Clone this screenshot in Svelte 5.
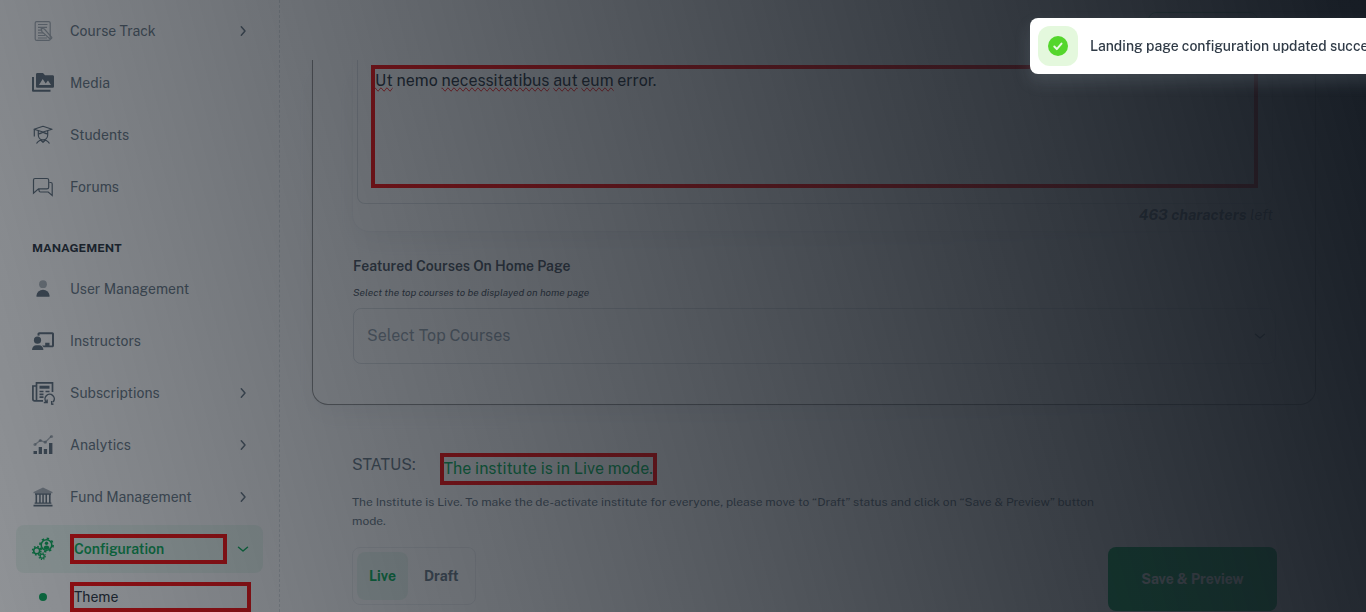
<script>
  const general = [
    { label: 'Course Track', icon: 'track', expandable: true },
    { label: 'Media', icon: 'media' },
    { label: 'Students', icon: 'students' },
    { label: 'Forums', icon: 'forums' }
  ];
  const management = [
    { label: 'User Management', icon: 'user' },
    { label: 'Instructors', icon: 'instructors' },
    { label: 'Subscriptions', icon: 'subscriptions', expandable: true },
    { label: 'Analytics', icon: 'analytics', expandable: true },
    { label: 'Fund Management', icon: 'fund', expandable: true },
    { label: 'Configuration', icon: 'config', expandable: true, open: true }
  ];
  const words = [
    { text: 'Ut', flagged: true },
    { text: 'nemo' },
    { text: 'necessitatibus', flagged: true },
    { text: 'aut', flagged: true },
    { text: 'eum', flagged: true },
    { text: 'error.' }
  ];
  let about = $state(words.map((w) => w.text).join(' '));
  let status = $state('Live');
</script>

{#snippet icon(name)}
  <svg class="icon" viewBox="0 0 24 24" aria-hidden="true" fill="none" stroke="currentColor">
    {#if name === 'track'}
      <g opacity="0.55" stroke-width="1.2">
        <rect x="4.2" y="2.6" width="15" height="18.800" rx="1.5" />
        <path d="M7 5.500h9.500M7 8.300h9M7 11.100h3.500M7 13.900h5M7 16.500h7M7 19h9" />
        <path d="M10.200 9.200l3.200.8 7.300 8.300c.6.800-.9 2.300-1.800 1.600l-8-7.300z" />
      </g>
    {:else if name === 'media'}
      <path d="M2 6v13.800h17.500" stroke-width="2" stroke-linejoin="round" />
      <path fill="currentColor" stroke="none" fill-rule="evenodd" d="M6.400 2h5.600l2 2.200h7.600c.8 0 1.400.6 1.400 1.400v9.800c0 .8-.6 1.400-1.400 1.400H6.400C5.600 16.800 5 16.200 5 15.400v-12C5 2.600 5.600 2 6.400 2zM8 14h12l-3-4.400-2.300 3-3-4.600z" />
    {:else if name === 'students'}
      <g stroke-width="1.200" stroke-linejoin="round">
        <path d="M3 6.300L12 3.300l9 3L12 9zM3.300 7v6.500M7.300 8v4c0 3 2.200 4.800 4.700 4.800s4.700-1.800 4.700-4.800V8M7.500 10.800c2.500-.2 3.500-1.300 4.500-1.300s2 1.100 4.500 1.300M5.500 20.500c1-1.800 2-2.500 4-3.500l2.500 2.300 2.500-2.300c2 1 3 1.700 4 3.500" />
      </g>
    {:else if name === 'forums'}
      <path d="M2.500 5c0-1 .5-1.500 1.500-1.500h12c1 0 1.700.7 1.700 1.700v7c0 1-.7 1.700-1.700 1.700H7.500l-5 4.300zM18.500 7.500h1.300c.8 0 1.400.6 1.400 1.400v11.600l-4-3.500H9.500c-1 0-1.500-.6-1.500-1.500V14" stroke-width="1.200" />
    {:else if name === 'user'}
      <g fill="currentColor" stroke="none">
        <circle cx="12" cy="7.200" r="3.900" opacity="0.5" />
        <path d="M5.500 19.800v-1.200a6.500 5.900 0 0 1 13 0v1.200z" />
      </g>
    {:else if name === 'instructors'}
      <g fill="currentColor" stroke="none">
        <circle cx="6.500" cy="11.200" r="3.600" />
        <path d="M1 21c0-3 2-4.800 4.400-4.800h2.700c2.400 0 4.300 1.800 4.300 4.800z" />
        <path d="M6.500 6.500V5c0-1 .8-1.800 1.800-1.800h13c1 0 1.700.8 1.700 1.800v11.500c0 1-.7 1.800-1.700 1.800H12.500c-.3-.8-.8-1.300-1.500-1.800h3.200V13.800h4.300v2.700H21V5.200H8.500v1.600z" />
      </g>
    {:else if name === 'subscriptions'}
      <g stroke-width="1.700">
        <path d="M5 5H1.900v13c0 1.200.8 1.900 1.800 1.900H12M5.500 19.500V1.900h16V11" />
        <path d="M8.500 6.200h10" stroke-width="3" />
        <path d="M8.500 10.500h4M14.500 10.500h4M8.500 13.300h4M8.500 16.200h4" />
        <path d="M15.500 21.200a4.600 4.600 0 1 1 6.600-.3M12.800 21.600h3.300v-3M22.500 23.200l-1.800-.2v-3" stroke-width="1.500" />
      </g>
    {:else if name === 'analytics'}
      <path d="M4 11.500l5.300-4 5 1.700 6-6" opacity="0.5" stroke-width="1.400" />
      <g fill="currentColor" stroke="none">
        <g opacity="0.5">
          <circle cx="4" cy="11.500" r="1.600" /><circle cx="9.300" cy="7.500" r="1.600" />
          <circle cx="14.300" cy="9.200" r="1.600" /><circle cx="20.500" cy="3.500" r="1.600" />
        </g>
        <path d="M2.500 18h3.500v3H2.500zM7.700 14h3.300v7H7.700zM12.800 16h3.300v5h-3.300zM18 10h3.400v11H18z" />
      </g>
    {:else if name === 'fund'}
      <g fill="currentColor" stroke="none">
        <path d="M12 2.500L21.500 7v1.200h-19V7z" opacity="0.55" />
        <path d="M4 8.300h16v1.400H4zM4.500 9.700h1.600v8H4.500zM8.200 9.700h1.500v8H8.200zM11.300 9.700h1.500v8h-1.500zM14.500 9.700H16v8h-1.500zM18 9.700h1.600v8H18zM3.600 17.500h16.800v1.300H3.600zM2.500 19.800h19v1.700h-19z" />
      </g>
    {:else}
      <circle cx="15.500" cy="8" r="5.300" stroke-width="1.600" />
      <circle cx="15.500" cy="8" r="6.600" stroke-width="1.700" stroke-dasharray="2.400 2.780" />
      <circle cx="5.700" cy="13.700" r="3" stroke-width="1.600" />
      <circle cx="5.700" cy="13.700" r="4.200" stroke-width="1.500" stroke-dasharray="1.600 1.700" />
      <circle cx="11.200" cy="19.200" r="2" stroke-width="1.300" />
      <circle cx="11.200" cy="19.200" r="3.200" stroke-width="1.300" stroke-dasharray="1.200 1.310" />
      <g fill="currentColor" stroke="none">
        <circle cx="15.500" cy="6.300" r="1.700" />
        <path d="M12.500 11.500c0-2 1.300-3 3-3s3 1 3 3l-3 1.200z" />
      </g>
    {/if}
  </svg>
{/snippet}

{#snippet chevron(open)}
  <svg class="chevron" viewBox="0 0 16 16" aria-hidden="true" fill="none" stroke="currentColor" stroke-width="1.500" stroke-linecap="round" stroke-linejoin="round">
    <path d={open ? 'M3.500 6.200L8 10l4.500-3.800' : 'M6.300 3.800L10 8l-3.700 4.200'} />
  </svg>
{/snippet}

{#snippet navItem(item)}
  <li>
    {#if item.expandable}
      <button type="button" class="item" class:active={item.open} aria-expanded={!!item.open}>
        {@render icon(item.icon)}
        <span class="label" class:marked={item.open}>{item.label}</span>
        {@render chevron(item.open)}
      </button>
    {:else}
      <a class="item" href="#{item.icon}">
        {@render icon(item.icon)}
        <span class="label">{item.label}</span>
      </a>
    {/if}
  </li>
{/snippet}

<div class="app">
  <nav class="sidebar">
    <ul>
      {#each general as item}{@render navItem(item)}{/each}
    </ul>
    <h2>Management</h2>
    <ul>
      {#each management as item}{@render navItem(item)}{/each}
      <li>
        <a class="item sub" href="#theme">
          <span class="dot"></span>
          <span class="label marked">Theme</span>
        </a>
      </li>
    </ul>
  </nav>

  <div class="page">
    <header><div class="outline"></div></header>
    <main>
      <section class="card">
        <div class="panel">
          <div class="field">
            <div class="editor">
              <div class="spelling" aria-hidden="true">{#each words as word, i}{i ? ' ' : ''}<span class:flagged={word.flagged}>{word.text}</span>{/each}</div>
              <textarea aria-label="About the institute" spellcheck="false" bind:value={about}></textarea>
            </div>
          </div>
          <p class="count"><strong>463 characters</strong> left</p>
        </div>

        <label class="title" for="courses">Featured Courses On Home Page</label>
        <p class="hint">Select the top courses to be displayed on home page</p>
        <div class="select">
          <select id="courses"><option>Select Top Courses</option></select>
          {@render chevron(true)}
        </div>
      </section>

      <section class="status">
        <div class="state">
          <span class="name">STATUS:</span>
          <span class="marked live">The institute is in Live mode.</span>
        </div>
        <p class="note">
          The Institute is Live. To make the de-activate institute for everyone, please move to “Draft” status and click on “Save &amp; Preview” button mode.
        </p>
        <div class="actions">
          <div class="toggle">
            {#each ['Live', 'Draft'] as option}
              <button type="button" class:on={status === option} aria-pressed={status === option} onclick={() => (status = option)}>{option}</button>
            {/each}
          </div>
          <button type="button" class="save">Save &amp; Preview</button>
        </div>
      </section>
    </main>
  </div>
</div>

<div class="backdrop"></div>

<div class="toast" role="status">
  <span class="badge">
    <svg viewBox="0 0 24 24" aria-hidden="true">
      <circle cx="12" cy="12" r="10" fill="#54d62c" />
      <path d="M8.300 12.500l2.500 2.600 4.700-5.500" fill="none" stroke="#e9f9e4" stroke-width="2" stroke-linecap="round" stroke-linejoin="round" />
    </svg>
  </span>
  <span>Landing page configuration updated successfully</span>
</div>

<style>
  :global(body) {
    overflow: hidden;
    background: #fff;
    color: #212b36;
    font-family: "Public Sans", Inter, sans-serif;
    font-size: 14px;
    line-height: 22px;
  }
  .app, .app *, .toast { box-sizing: border-box; }
  button, select, textarea { font: inherit; color: inherit; }
  p, h2, ul { margin: 0; padding: 0; }
  .app { display: flex; height: 100vh; overflow: hidden; }

  .sidebar {
    flex: 0 0 280px;
    padding: 7px 16px 0;
    border-right: 1px dashed rgba(145, 158, 171, 0.32);
    overflow: hidden;
  }
  ul { list-style: none; display: flex; flex-direction: column; gap: 4px; }
  h2 {
    padding: 28px 16px 8px;
    font-size: 12px;
    line-height: 18px;
    font-weight: 700;
    text-transform: uppercase;
  }
  .item {
    display: flex;
    align-items: center;
    gap: 15px;
    width: 100%;
    height: 48px;
    padding: 0 12px 0 15px;
    border: 0;
    border-radius: 8px;
    background: none;
    color: #637381;
    text-align: left;
    text-decoration: none;
  }
  .item.active { background: rgba(0, 171, 85, 0.08); color: #00ab55; font-weight: 600; }
  .icon { flex: none; width: 24px; height: 24px; }
  .item:not(.active) .icon { color: #5a6a78; }
  .label { flex: 1; }
  .chevron { flex: none; width: 16px; height: 16px; }
  .marked { border: 4px solid #f00; }
  .active .label { margin-right: -7px; }
  .item.active .chevron { margin-left: 0; }
  .item.sub { height: 40px; color: #212b36; }
  .dot { flex: none; width: 8px; height: 8px; margin: 0 8px; border-radius: 50%; background: #00ab55; }

  .page { flex: 1; min-width: 0; display: flex; flex-direction: column; }
  header { flex: none; display: flex; justify-content: flex-end; height: 60px; padding: 12px 108px; }
  .outline { width: 110px; border: 1px solid rgba(0, 171, 85, 0.5); border-radius: 8px; }
  main { flex: 1; min-height: 0; overflow: hidden; padding: 0 50px 0 32px; }
  .card {
    padding: 0 39px 40px 40px;
    border: 1px solid #919191;
    border-top: 0;
    border-radius: 0 0 16px 16px;
    box-shadow: 0 0 2px rgba(145, 158, 171, 0.2), 0 12px 24px -4px rgba(145, 158, 171, 0.12);
  }
  .panel {
    padding: 0 3px 5px 4px;
    border-radius: 0 0 16px 16px;
    box-shadow: 0 0 2px rgba(145, 158, 171, 0.2), 0 12px 24px -4px rgba(145, 158, 171, 0.12);
  }
  .field {
    padding: 5px 14px 15px 13px;
    border: 1px solid rgba(145, 158, 171, 0.32);
    border-top: 0;
    border-radius: 0 0 8px 8px;
  }
  .editor { display: grid; border: 4px solid #f00; font-size: 16px; line-height: 23px; }
  .spelling, textarea { grid-area: 1 / 1; width: 100%; height: 115px; padding: 0; border: 0; }
  .spelling { color: transparent; }
  .flagged { text-decoration: spelling-error; }
  textarea { display: block; background: none; resize: none; outline: 0; }
  .count { font-size: 15px; font-style: italic; text-align: right; color: #637381; }
  .title { display: block; margin-top: 24px; font-weight: 600; color: #454f5b; }
  .hint { margin: 6px 0 7px; font-size: 10px; line-height: 18px; font-style: italic; color: #454f5b; }
  .select { display: grid; align-items: center; }
  .select > * , .select > :global(svg) { grid-area: 1 / 1; }
  .select .chevron { justify-self: end; margin-right: 8px; pointer-events: none; color: #637381; }
  select {
    appearance: none;
    width: 100%;
    height: 56px;
    padding: 0 13px;
    border: 1px solid rgba(145, 158, 171, 0.32);
    border-radius: 8px;
    background: none;
    color: #919eab;
    font-size: 16px;
  }

  .status { padding: 48px 39px 0 40px; color: #637381; }
  .state { display: flex; gap: 24px; font-size: 16px; line-height: 24px; }
  .live { color: #00ab55; }
  .note { max-width: 756px; margin-top: 8px; font-size: 12px; line-height: 19px; }
  .actions { display: flex; justify-content: space-between; align-items: flex-start; margin-top: 16px; }
  .toggle { display: flex; gap: 4px; padding: 4px; border: 1px solid rgba(145, 158, 171, 0.16); border-radius: 8px; }
  .toggle button { height: 48px; padding: 0 12px; border: 0; border-radius: 8px; background: none; font-weight: 700; }
  .toggle .on { background: rgba(0, 171, 85, 0.08); color: #00ab55; }
  .save { width: 169px; height: 64px; border: 0; border-radius: 8px; background: #00ab55; color: #fff; font-weight: 700; }

  .backdrop {
    position: fixed;
    inset: 0;
    background: linear-gradient(75deg, rgba(22, 28, 36, 0.48) 0%, rgb(22, 28, 36) 100%);
  }
  .toast {
    position: fixed;
    top: 18px;
    right: -44px;
    display: flex;
    align-items: center;
    gap: 12px;
    width: 380px;
    padding: 8px;
    border-radius: 8px;
    background: #fff;
    box-shadow: 0 8px 16px rgba(145, 158, 171, 0.2);
    color: #2f3a46;
    font-weight: 500;
    white-space: nowrap;
  }
  .badge { flex: none; display: grid; place-items: center; width: 40px; height: 40px; border-radius: 12px; background: rgba(84, 214, 44, 0.16); }
  .badge svg { width: 24px; height: 24px; }
</style>
